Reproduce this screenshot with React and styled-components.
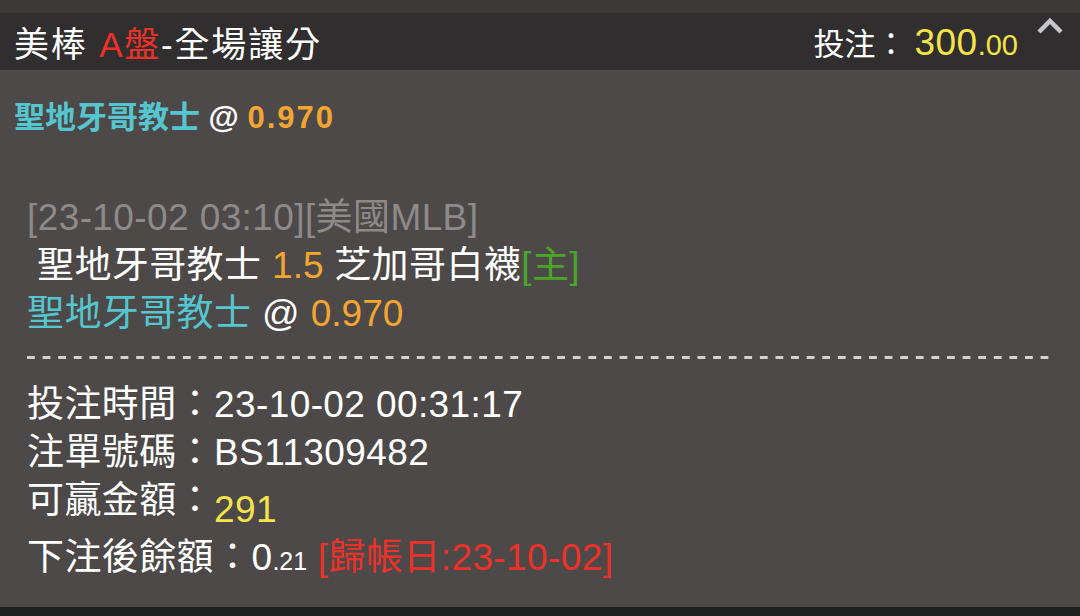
import React from "react";
import styled, { createGlobalStyle } from "styled-components";

const GlobalStyle = createGlobalStyle`
    html, body {
        margin: 0;
        padding: 0;
        background: #1f2020;
    }
    body {
        font-family: "Liberation Sans", "Noto Sans CJK TC", sans-serif;
        color: #ffffff;
    }
`;

const Page = styled.div`
    width: 1080px;
    height: 616px;
    display: flex;
    flex-direction: column;
    background: #1f2020;
    overflow: hidden;
`;

const TopStrip = styled.div`
    height: 13px;
    background: #3c3939;
`;

const Header = styled.div`
    height: 57px;
    background: #302e2e;
    display: flex;
    align-items: center;
    padding: 0 16px 0 14px;
`;

const Title = styled.div`
    flex: 1;
    font-size: 35px;
    letter-spacing: 1.8px;
    white-space: nowrap;
`;

const Red = styled.span`
    color: #ec3128;
`;

const Stake = styled.div`
    display: flex;
    align-items: baseline;
    font-size: 31px;
    margin-right: 18px;
`;

const Amount = styled.span`
    color: #f6e34a;
    font-size: 37px;
    margin-left: 8px;
    letter-spacing: 0.5px;
`;

const Small = styled.span`
    font-size: ${(p) => p.size || 25}px;
    letter-spacing: 0;
`;

const Chevron = styled.svg`
    align-self: flex-start;
    margin-top: 4px;
`;

const Body = styled.div`
    flex: 1;
    background: #4c4948;
    padding: 24px 25px 0 27px;
    display: flex;
    flex-direction: column;
`;

const Pick = styled.div`
    font-size: 31px;
    font-weight: bold;
    line-height: 48px;
    margin-left: -13px;
    margin-bottom: 52px;
`;

const Line = styled.div`
    font-size: 37px;
    line-height: 48px;
    letter-spacing: 0.4px;
    white-space: nowrap;
    padding-left: ${(p) => p.indent || 0}px;
    color: ${(p) => p.color || "#ffffff"};
`;

const Cyan = styled.span`
    color: #55c6cf;
`;

const Orange = styled.span`
    color: #f2a631;
    letter-spacing: ${(p) => p.spacing || 0}px;
`;

const Green = styled.span`
    color: #4aa52a;
`;

const Yellow = styled.span`
    color: #f6e34a;
    display: inline-block;
    vertical-align: -9px;
`;

const Dashes = styled.div`
    height: 3px;
    margin: 18px 0 22px;
    background-image: linear-gradient(to right, #d2d2d2 0 8px, transparent 8px 15.6px);
    background-size: 15.6px 3px;
    background-repeat: repeat-x;
`;

const BottomStrip = styled.div`
    height: 9px;
    background: #1f2020;
`;

const App = () => {
    return (
        <>
            <GlobalStyle />
            <Page>
                <TopStrip />
                <Header>
                    <Title>
                        美棒 <Red>A盤</Red>-全場讓分
                    </Title>
                    <Stake>
                        投注：
                        <Amount>
                            300<Small size={29}>.00</Small>
                        </Amount>
                    </Stake>
                    <Chevron width="28" height="18" viewBox="0 0 28 18">
                        <path
                            d="M3 15 L14 4 L25 15"
                            fill="none"
                            stroke="#c6c6ca"
                            strokeWidth="4.5"
                        />
                    </Chevron>
                </Header>
                <Body>
                    <Pick>
                        <Cyan>聖地牙哥教士</Cyan> @ <Orange spacing={2}>0.970</Orange>
                    </Pick>
                    <Line color="#8d8a89">[23-10-02 03:10][美國MLB]</Line>
                    <Line indent={10}>
                        聖地牙哥教士 <Orange>1.5</Orange> 芝加哥白襪<Green>[主]</Green>
                    </Line>
                    <Line>
                        <Cyan>聖地牙哥教士</Cyan> @ <Orange>0.970</Orange>
                    </Line>
                    <Dashes />
                    <Line>投注時間：23-10-02 00:31:17</Line>
                    <Line>注單號碼：BS11309482</Line>
                    <Line>
                        可贏金額：<Yellow>291</Yellow>
                    </Line>
                    <Line>
                        下注後餘額：0<Small>.21</Small> <Red>[歸帳日:23-10-02]</Red>
                    </Line>
                </Body>
                <BottomStrip />
            </Page>
        </>
    );
};

export default App;
